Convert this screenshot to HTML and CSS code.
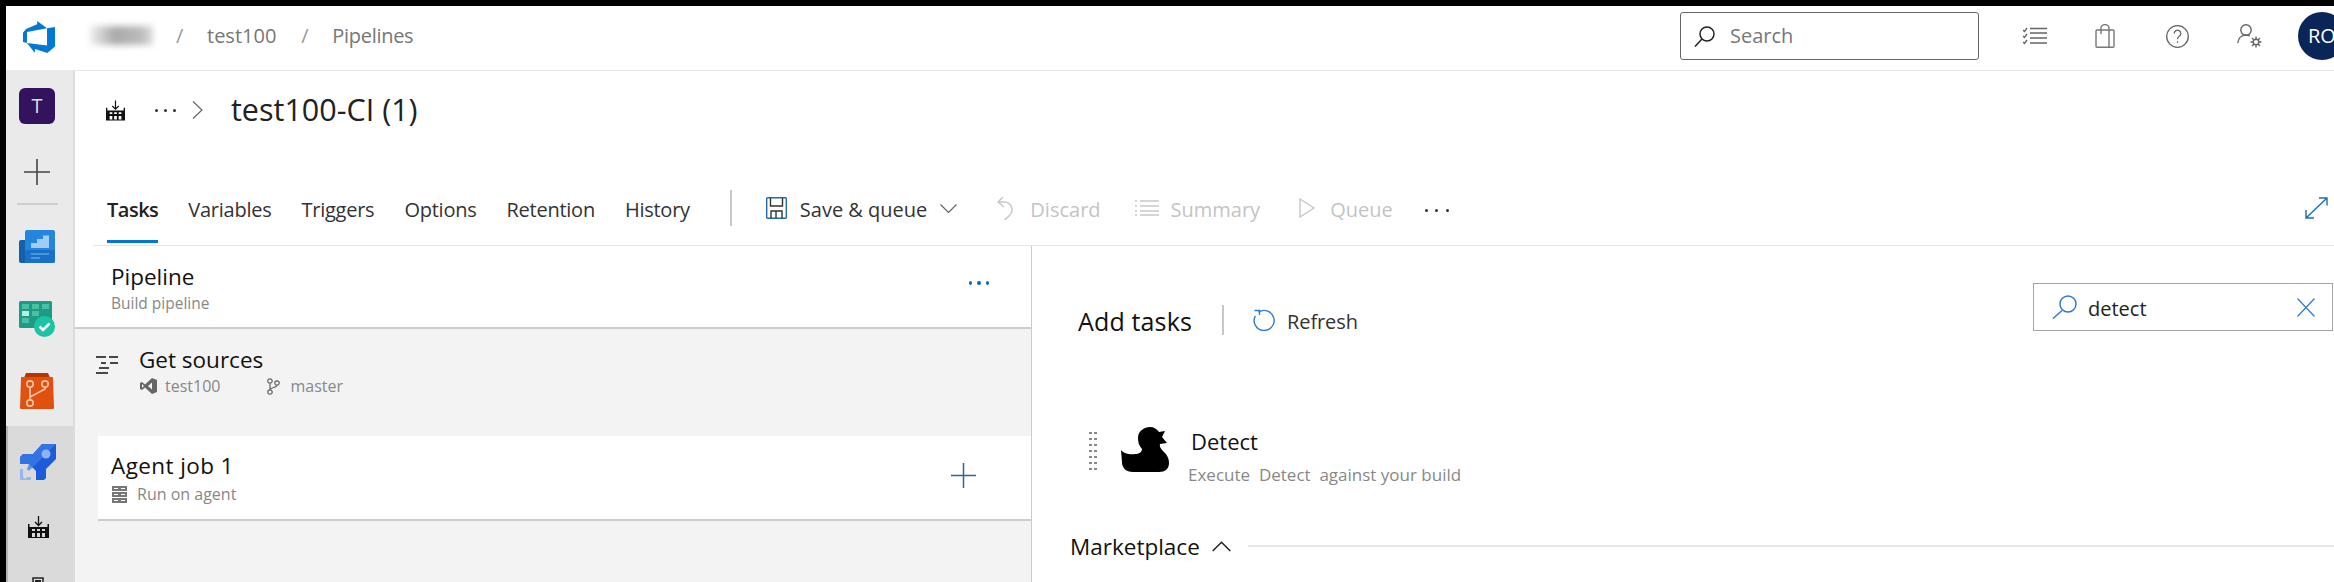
FILE: index.html
```html
<!DOCTYPE html>
<html lang="en">
<head>
<meta charset="utf-8">
<title>test100-CI (1) - Pipelines</title>
<link rel="stylesheet" href="styles.css">
</head>
<body>
<div class="app">
  <header class="topbar">
    <svg class="logo" viewBox="0 0 24 24"><path fill="#0078d4" d="M0 8.877L2.247 5.91l8.405-3.416V.022l7.37 5.393L2.966 8.338v8.225L0 15.707zm24-4.45v14.651l-5.753 4.9-9.303-3.057v3.056l-5.978-7.416 15.057 1.798V5.415z"/></svg>
    <nav class="crumbs">
      <span class="blurred"></span>
      <span class="slash">/</span>
      <span class="crumb-a">test100</span>
      <span class="slash">/</span>
      <span class="crumb-b">Pipelines</span>
    </nav>
    <div class="searchbox">
      <svg class="ic-search" viewBox="0 0 21 21"><circle cx="13" cy="8" r="7" fill="none" stroke="#222" stroke-width="1.5"/><path d="M8 13L1 20.5" stroke="#222" stroke-width="1.5"/></svg>
      <span class="search-ph">Search</span>
    </div>
    <div class="top-icons">
      <svg class="ic-check" viewBox="0 0 24 18" fill="none" stroke="#666" stroke-width="1.4"><path d="M0 3l1.5 1.5L4 1M0 9l1.5 1.5L4 7M0 15l1.5 1.5L4 13"/><path d="M7 1.5h17M7 6h17M7 11h17M7 16h17"/></svg>
      <svg class="ic-bag" viewBox="0 0 20 24" fill="none" stroke="#777" stroke-width="1.4"><rect x="1" y="6" width="18" height="17.2" rx="1"/><path d="M6 10V4a4 3.4 0 0 1 8 0v6M14 6v17"/></svg>
      <svg class="ic-help" viewBox="0 0 23 23" fill="none" stroke="#666" stroke-width="1.3"><circle cx="11.5" cy="11.5" r="10.8"/><path d="M8.2 8.5a3.3 3.3 0 1 1 5 2.8c-1.2.8-1.7 1.5-1.7 3"/><path d="M11.5 16.2v1.6"/></svg>
      <svg class="ic-user" viewBox="0 0 25 24" fill="none" stroke="#666" stroke-width="1.4"><circle cx="9" cy="6" r="5.2"/><path d="M.8 19c.5-4.500 3.500-8 8.200-8 1.500 0 2.800.4 3.800 1"/><circle cx="19" cy="18" r="2.800"/><path d="M19 12.500v2.500M19 21v2.500M13.500 18h2.500M22 18h2.500M15 14l2 2M21 20l2 2M23 14l-2 2M17 20l-2 2"/></svg>
    </div>
    <div class="avatar">RO</div>
  </header>

  <div class="body">
    <aside class="sidebar">
      <div class="side-top">
        <div class="tile">T</div>
        <svg class="side-plus" viewBox="0 0 26 26"><path d="M13 0v26M0 13h26" stroke="#444" stroke-width="1.6"/></svg>
        <div class="side-sep"></div>
        <svg class="nav-ic boards" viewBox="0 0 36 33">
          <path fill="#1560ad" d="M0 12a2 2 0 0 1 2-2h8v23H2a2 2 0 0 1-2-2z"/>
          <rect x="6" width="30" height="33" rx="2" fill="#2385de"/>
          <rect x="6" y="20" width="30" height="13" rx="2" fill="#1a70c6"/>
          <path fill="#9fcdf3" d="M12 13h6V9h6V5.500h6V18H12z"/>
          <path stroke="#5aa5e6" stroke-width="1.300" d="M12 24h18M12 28h9"/>
        </svg>
        <svg class="nav-ic plans" viewBox="0 0 36 36">
          <rect width="33" height="27" rx="1.500" fill="#1f9a84"/>
          <g fill="#48bfa6"><rect x="3" y="3" width="7" height="5"/><rect x="13" y="3" width="7" height="5"/><rect x="23" y="3" width="7" height="5"/><rect x="13" y="10" width="7" height="5"/><rect x="3" y="17" width="7" height="5"/></g>
          <rect x="3" y="10" width="7" height="5" fill="#b5f0e0"/>
          <circle cx="25.500" cy="25.500" r="10.500" fill="#1dc3a6"/>
          <path d="M20.500 25.500l3.500 3.500 6.500-6.500" fill="none" stroke="#fff" stroke-width="2.600"/>
        </svg>
        <svg class="nav-ic repos" viewBox="0 0 34 36">
          <path fill="#b93500" d="M6 0h22l2 5H4z"/>
          <path fill="#e0500f" d="M2 4h30a1 1 0 0 1 1 1l1 30a1 1 0 0 1-1 1H1a1 1 0 0 1-1-1L1 5a1 1 0 0 1 1-1z"/>
          <g fill="none" stroke="#fcc3a7" stroke-width="1.700"><circle cx="10" cy="11" r="3.200"/><circle cx="25" cy="11" r="3.200"/><circle cx="10" cy="30" r="3.200"/><path d="M10 14.200V27M25 14.200V16l-15 8"/></g>
        </svg>
      </div>
      <div class="side-active">
        <svg class="nav-ic rocket" viewBox="0 0 36 36">
          <path fill="#1e5bd8" d="M22 0h14v15L26 25v9l-2 2h-8V27L9 20H0v-7l3-3h10z"/>
          <path fill="#3b7be8" d="M22 0h14L9 27l-2-2 2-5H0v-7l3-3h10z" opacity=".75"/>
          <circle cx="26" cy="10" r="4.500" fill="#8fb2f2"/>
          <path fill="#93b8f8" d="M0 25h3v8h8v3H0z"/>
          <path fill="#dadada" d="M3 33l8-8 2 2-8 8z"/>
        </svg>
        <svg class="build-ic side-build" viewBox="0 0 21 22"><path d="M10.500 0v9M7 6l3.500 3.500L14 6" fill="none" stroke="#111" stroke-width="1.300"/><path fill="#111" fill-rule="evenodd" d="M0 8h1.500v3h18V8H21v14H0zM4 13v2h3v-2zM9 13v2h3v-2zM14 13v2h3v-2zM4 17v4h3v-4zM9 17v4h3v-4zM14 17v4h3v-4z"/></svg>
        <svg class="next-ic" viewBox="0 0 12 12"><rect x="1" y="1" width="10" height="12" fill="none" stroke="#222" stroke-width="1.500"/><rect x="3" y="3" width="6" height="3" fill="#222"/></svg>
      </div>
    </aside>

    <main class="content">
      <div class="title-row">
        <svg class="build-ic title-build" viewBox="0 0 21 22"><path d="M10.500 0v9M7 6l3.500 3.500L14 6" fill="none" stroke="#111" stroke-width="1.300"/><path fill="#111" fill-rule="evenodd" d="M0 8h1.500v3h18V8H21v14H0zM4 13v2h3v-2zM9 13v2h3v-2zM14 13v2h3v-2zM4 17v4h3v-4zM9 17v4h3v-4zM14 17v4h3v-4z"/></svg>
        <span class="dots title-dots"><i></i><i></i><i></i></span>
        <svg class="title-chev" viewBox="0 0 11 18"><path d="M1 .5L10 9l-9 8.500" fill="none" stroke="#666" stroke-width="1.200"/></svg>
        <h1 class="title">test100-CI (1)</h1>
      </div>

      <div class="tabs-row">
        <div class="tabs">
          <a class="tab active">Tasks</a>
          <a class="tab">Variables</a>
          <a class="tab">Triggers</a>
          <a class="tab">Options</a>
          <a class="tab">Retention</a>
          <a class="tab">History</a>
        </div>
        <div class="toolbar">
          <div class="tool-sep"></div>
          <svg class="ic-save" viewBox="0 0 21 22" fill="none" stroke="#1f6cb0" stroke-width="1.400"><path d="M1.500.7h18a.8.8 0 0 1 .8.8v19a.8.8 0 0 1-.8.8h-18a.8.8 0 0 1-.8-.8v-19a.8.8 0 0 1 .8-.8z"/><path d="M4.500 1v8h12V1" stroke="#333"/><path d="M5 21.300V14h11v7.300M10 14v7" stroke="#333"/></svg>
          <span class="tool save-label">Save &amp; queue</span>
          <svg class="ic-chev" viewBox="0 0 17 9"><path d="M.5.500l8 8 8-8" fill="none" stroke="#666" stroke-width="1.200"/></svg>
          <svg class="ic-discard" viewBox="0 0 18 24" fill="none" stroke="#c8c8c8" stroke-width="1.500"><path d="M7 1L2 6l6 5"/><path d="M2.500 6h6a7.800 7.800 0 0 1 5 13.500L8.500 24"/></svg>
          <span class="tool off discard-label">Discard</span>
          <svg class="ic-summary" viewBox="0 0 24 16" fill="none" stroke="#c8c8c8" stroke-width="1.400"><path d="M0 1h2M0 6h2M0 11h2M0 15h2M5 1h19M5 6h19M5 11h19M5 15h19"/></svg>
          <span class="tool off summary-label">Summary</span>
          <svg class="ic-queue" viewBox="0 0 16 20"><path d="M1 1l14 9-14 9z" fill="none" stroke="#c8c8c8" stroke-width="1.400"/></svg>
          <span class="tool off queue-label">Queue</span>
          <span class="dots tool-dots"><i></i><i></i><i></i></span>
        </div>
        <svg class="ic-expand" viewBox="0 0 23 22" fill="none" stroke="#1f6cb0" stroke-width="1.400"><path d="M1 21L22 1M14 1h8v7.500M1 13v8h8"/></svg>
      </div>

      <div class="split">
        <section class="left">
          <div class="pipe-head">
            <div>
              <div class="row-title">Pipeline</div>
              <div class="row-sub pipe-sub">Build pipeline</div>
            </div>
            <span class="dots blue-dots"><i></i><i></i><i></i></span>
          </div>
          <div class="sources">
            <svg class="ic-src" viewBox="0 0 22 18" stroke="#111" stroke-width="1.500"><path d="M0 1h10M13 1h9M5 7h5M14 7h8M3 12h10M0 17h12"/></svg>
            <div>
              <div class="row-title">Get sources</div>
              <div class="src-meta">
                <svg class="ic-vs" viewBox="0 0 17 16"><path fill="#666" fill-rule="evenodd" d="M12 0l5 2v12l-5 2-7-6.500L2 12l-2-1V5l2-1 3 2.500zM12 4.500L8 8l4 3.500zM2 6v4l2-2z"/></svg>
                <span class="row-sub">test100</span>
                <svg class="ic-branch" viewBox="0 0 13 17" fill="none" stroke="#666" stroke-width="1.200"><circle cx="3" cy="3" r="2.200"/><circle cx="10" cy="5" r="2.200"/><circle cx="3" cy="14" r="2.200"/><path d="M3 5.200v6.600M10 7.200c0 2.500-6.500 2-7 4.500"/></svg>
                <span class="row-sub">master</span>
              </div>
            </div>
          </div>
          <div class="job">
            <div>
              <div class="row-title job-title">Agent job 1</div>
              <div class="job-sub">
                <svg class="ic-server" viewBox="0 0 15 17"><path fill="#777" fill-rule="evenodd" d="M0 0h15v5H0zM2 2v1h4V2zM9 2v1h4V2zM0 6h15v5H0zM2 8v1h4V8zM9 8v1h4V8zM0 12h15v5H0zM2 14v1h4v-1zM9 14v1h4v-1z"/></svg>
                <span class="row-sub">Run on agent</span>
              </div>
            </div>
            <svg class="job-plus" viewBox="0 0 25 25"><path d="M12.500 0v25M0 12.500h25" stroke="#2f649e" stroke-width="1.500"/></svg>
          </div>
        </section>

        <section class="right">
          <div class="right-head">
            <div class="add-group">
              <h2 class="add-title">Add tasks</h2>
              <div class="add-sep"></div>
              <svg class="ic-refresh" viewBox="0 0 22 22" fill="none" stroke="#2b7cd3" stroke-width="1.400"><path d="M5.500 3.200a10 10 0 1 1-3.200 3.600"/><path d="M1.500 1.500h5v4.500"/></svg>
              <span class="refresh-label">Refresh</span>
            </div>
            <div class="task-search">
              <svg class="ic-search-blue" viewBox="0 0 25 24"><circle cx="16" cy="9" r="8" fill="none" stroke="#2b7cd3" stroke-width="1.500"/><path d="M10 15.500L1 23.500" stroke="#2b7cd3" stroke-width="1.500"/></svg>
              <span class="task-q">detect</span>
              <svg class="ic-x" viewBox="0 0 18 19"><path d="M.5.500l17 18M17.500.500l-17 18" stroke="#2b7cd3" stroke-width="1.200"/></svg>
            </div>
          </div>
          <div class="task">
            <div class="handle"></div>
            <svg class="duck" viewBox="0 0 48 46"><path fill="#000" d="M0 23C3 27 10 28 14 27C18 27 21 25 21 22C18 19 17 15 17 11C17 4 23 0 29 0C33 0 36 2 38 5L44 4L41 10L46 16L39 17C38 20 41 23 44 26C47 29 48 33 48 36C48 42 44 45 38 45L12 45C5 45 1 41 1 35Z"/></svg>
            <div class="task-text">
              <div class="task-name">Detect</div>
              <div class="task-desc">Execute&nbsp; Detect&nbsp; against your build</div>
            </div>
          </div>
          <div class="market">
            <span class="market-label">Marketplace</span>
            <svg class="ic-up" viewBox="0 0 19 11"><path d="M.7 10L9.500 1.200 18.300 10" fill="none" stroke="#222" stroke-width="1.500"/></svg>
            <div class="market-line"></div>
          </div>
        </section>
      </div>
    </main>
  </div>
</div>
</body>
</html>
```

FILE: styles.css
```css
* { box-sizing: border-box; }
html, body { margin: 0; height: 100%; }
body { background: #000; overflow: hidden; font-family: "Open Sans", "Liberation Sans", sans-serif; color: #222; }
svg { display: block; flex: none; }

.app { width: 2334px; height: 582px; padding: 6px 0 0 6px; display: flex; flex-direction: column; overflow: hidden; }

/* top bar */
.topbar { height: 65px; flex: none; background: #fff; border-bottom: 1px solid #e8e8e8; display: flex; align-items: center; overflow: hidden; }
.logo { width: 32px; height: 32px; margin: 0 0 2px 17px; }
.crumbs { display: flex; align-items: center; margin: 0 0 5px 35px; font-size: 20px; color: #777; }
.blurred { width: 63px; height: 19px; background: linear-gradient(90deg, #eee, #aaa 40%, #bbb 80%, #ddd); filter: blur(3px); margin-right: 23px; }
.slash { color: #999; width: 8px; margin-right: 23px; }
.crumb-a { margin-right: 25px; }
.crumb-b { letter-spacing: -0.3px; }
.searchbox { width: 299px; height: 48px; margin-left: auto; border: 1px solid #666; border-radius: 3px; display: flex; align-items: center; padding-left: 13px; font-size: 20px; color: #777; margin-top: -4px; }
.ic-search { width: 21px; height: 21px; margin-right: 15px; }
.search-ph { margin-top: -2px; }
.top-icons { display: flex; align-items: center; margin-left: 44px; margin-top: -4px; }
.ic-check { width: 24px; height: 18px; }
.ic-bag { width: 20px; height: 24px; margin-left: 48px; }
.ic-help { width: 23px; height: 23px; margin-left: 51px; }
.ic-user { width: 25px; height: 24px; margin-left: 48px; }
.avatar { width: 48px; height: 48px; flex: none; margin: -4px -12px 0 36px; border-radius: 50%; background: #0a2558; color: #fff; font-size: 20px; line-height: 48px; padding-left: 10px; }

.body { flex: 1; display: flex; min-height: 0; }

/* side rail */
.sidebar { width: 69px; flex: none; background: #eaeaea; border-right: 2px solid #dcdcdc; display: flex; flex-direction: column; }
.side-top { height: 355px; padding-top: 17px; display: flex; flex-direction: column; align-items: center; padding-right: 5px; }
.tile { width: 36px; height: 36px; border-radius: 6px; background: #33125e; color: #ddd; font-size: 20px; line-height: 36px; text-align: center; }
.side-plus { width: 26px; height: 26px; margin-top: 35px; }
.side-sep { width: 41px; height: 2px; background: #cfcfcf; margin-top: 18px; }
.nav-ic { width: 36px; height: 36px; }
.boards { height: 33px; margin-top: 25px; }
.plans { margin-top: 38px; }
.repos { width: 34px; margin-top: 36px; }
.side-active { flex: 1; background: #dadada; border-left: 2px solid #b5b5b5; padding-top: 18px; display: flex; flex-direction: column; align-items: center; padding-right: 5px; overflow: hidden; }
.side-build { width: 21px; height: 22px; margin-top: 36px; }
.next-ic { width: 12px; height: 12px; margin-top: 39px; }

/* content */
.content { flex: 1; min-width: 0; background: #fff; display: flex; flex-direction: column; }
.title-row { height: 78px; flex: none; display: flex; align-items: center; padding-left: 31px; }
.title-build { width: 19px; height: 21px; }
.dots { display: flex; }
.dots i { width: 3px; height: 3px; border-radius: 50%; background: #333; }
.title-dots { width: 21px; justify-content: space-between; margin-left: 30px; }
.title-chev { width: 11px; height: 18px; margin-left: 16px; }
.title { margin: 0 0 3px 28px; font-size: 30.5px; font-weight: 400; color: #222; }

.tabs-row { height: 97px; flex: none; margin-left: 18px; padding-left: 14px; border-bottom: 1px solid #e6e6e6; display: flex; align-items: flex-end; }
.tabs { display: flex; gap: 30px; margin-bottom: 2px; }
.tab { height: 66px; display: block; font-size: 20px; line-height: 66px; letter-spacing: -0.25px; color: #333; border-bottom: 3px solid transparent; }
.tab.active { font-weight: 600; color: #222; border-bottom-color: #0078d4; letter-spacing: -0.5px; }
.toolbar { display: flex; align-items: center; height: 36px; margin: 0 0 19px 40px; font-size: 20px; }
.tool-sep { width: 2px; height: 36px; background: #c8c8c8; }
.ic-save { width: 21px; height: 22px; margin-left: 34px; }
.tool { color: #333; margin-top: 3px; }
.tool.off { color: #c4c4c4; }
.save-label { margin-left: 13px; }
.ic-chev { width: 17px; height: 9px; margin-left: 13px; }
.ic-discard { width: 18px; height: 24px; margin-left: 39px; }
.discard-label { margin-left: 16px; }
.ic-summary { width: 24px; height: 16px; margin-left: 34px; }
.summary-label { margin-left: 12px; }
.ic-queue { width: 16px; height: 20px; margin-left: 39px; }
.queue-label { margin-left: 15px; }
.tool-dots { width: 24px; justify-content: space-between; margin-left: 32px; margin-top: 4px; }
.ic-expand { width: 23px; height: 22px; margin: 0 6px 26px auto; }

.split { flex: 1; min-height: 0; display: flex; }
.left { width: 956px; flex: none; background: #f3f3f3; display: flex; flex-direction: column; }
.pipe-head { height: 83px; flex: none; background: #fff; border-bottom: 2px solid #cdcdcd; display: flex; justify-content: space-between; padding: 16px 0 0 36px; }
.row-title { font-size: 22.5px; line-height: 30px; color: #111; }
.job-title { letter-spacing: 0.4px; }
.row-sub { font-size: 16px; color: #888; }
.pipe-sub { font-size: 15.5px; line-height: 22px; }
.blue-dots { gap: 5px; width: 20px; height: 5px; margin: 19px 42px 0 0; }
.blue-dots i { width: 4px; height: 4px; background: #106ebe; }

.sources { height: 107px; flex: none; display: flex; padding: 16px 0 0 21px; }
.ic-src { width: 22px; height: 18px; margin: 11px 21px 0 0; }
.src-meta { display: flex; align-items: center; height: 26px; margin-top: -2px; }
.ic-vs { width: 17px; height: 16px; margin: 0 8px 0 1px; }
.ic-branch { width: 13px; height: 17px; margin: 0 10px 0 47px; }

.job { height: 85px; flex: none; margin-left: 23px; background: #fff; border-bottom: 2px solid #cdcdcd; display: flex; justify-content: space-between; padding: 15px 55px 0 13px; }
.job-sub { display: flex; align-items: center; height: 26px; }
.ic-server { width: 15px; height: 17px; margin: 0 10px 0 1px; }
.job-plus { width: 25px; height: 25px; margin-top: 12px; }

.right { flex: 1; min-width: 0; border-left: 1px solid #ccc; display: flex; flex-direction: column; }
.right-head { display: flex; justify-content: space-between; align-items: flex-start; height: 150px; flex: none; padding: 37px 1px 0 46px; }
.add-group { display: flex; align-items: center; height: 30px; margin-top: 22px; }
.add-title { margin: 0 0 -1px; font-size: 25px; letter-spacing: 0.15px; font-weight: 400; color: #111; }
.add-sep { width: 2px; height: 30px; background: #c8c8c8; margin-left: 30px; }
.ic-refresh { width: 22px; height: 22px; margin-left: 29px; }
.refresh-label { font-size: 20px; color: #333; margin: 3px 0 0 12px; letter-spacing: -0.1px; }
.task-search { width: 300px; height: 48px; border: 1px solid #a6a6a6; display: flex; align-items: center; padding: 0 17px 0 18px; }
.ic-search-blue { width: 25px; height: 24px; }
.task-q { font-size: 20px; color: #222; margin: 2px 0 0 11px; flex: 1; }
.ic-x { width: 18px; height: 19px; }

.task { height: 135px; flex: none; display: flex; align-items: flex-start; padding: 31px 0 0 56px; }
.handle { width: 10px; height: 42px; margin-top: 3px; background-image: radial-gradient(circle, #888 1.200px, transparent 1.500px); background-size: 5px 6px; }
.duck { width: 48px; height: 46px; margin-left: 23px; }
.task-text { margin-left: 19px; }
.task-name { font-size: 22px; line-height: 30px; color: #111; margin: -1px 0 0 3px; }
.task-desc { font-size: 17px; line-height: 24px; color: #888; margin-top: 7px; }
.market { display: flex; align-items: center; height: 30px; padding-left: 38px; }
.market-label { font-size: 22.5px; color: #111; }
.ic-up { width: 19px; height: 11px; margin-left: 12px; }
.market-line { flex: 1; height: 2px; background: #e6e6e6; margin-left: 17px; }
```
